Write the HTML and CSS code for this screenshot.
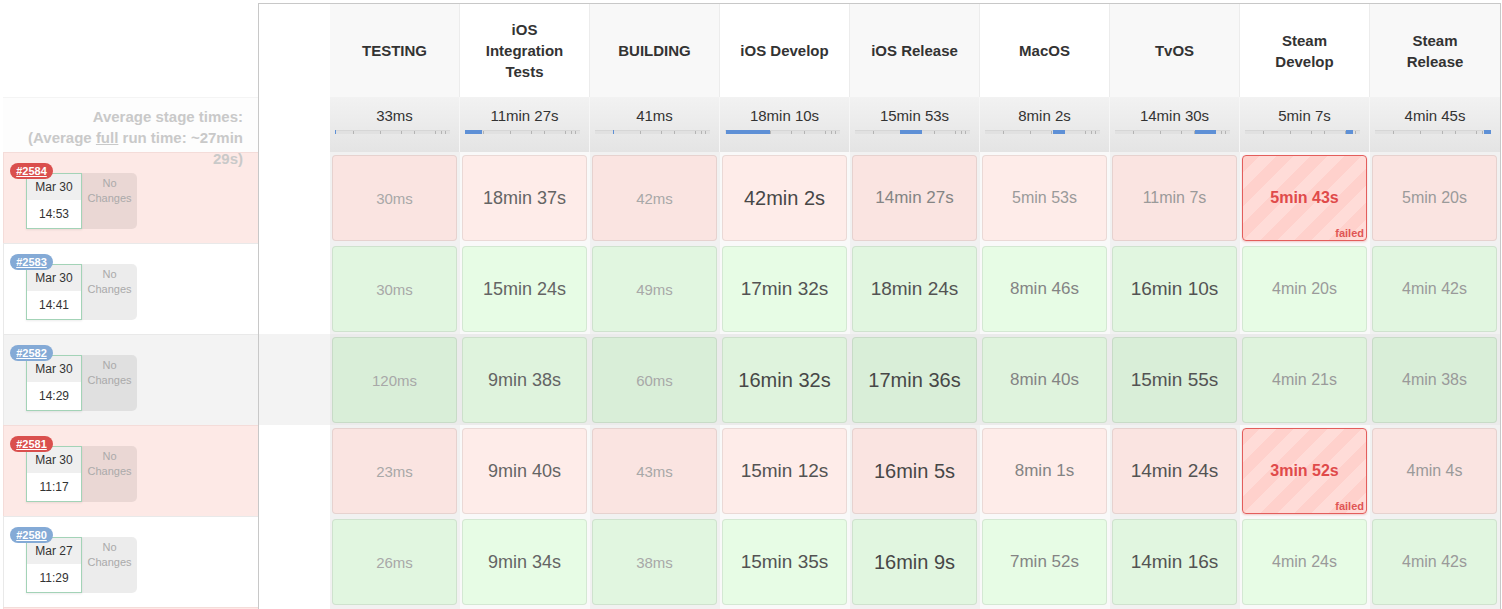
FILE: index.html
```html
<!DOCTYPE html>
<html>
<head>
  <meta charset="utf-8">
  <title>Stage View</title>
  <link rel="stylesheet" href="styles.css">
</head>
<body>
  <div class="stage-view">
    <!--builds-->
    <div class="jobs">
      <div class="jobs-head"></div>
      <div class="avg-label">Average stage times:<br>(Average <u>full</u> run time: ~27min 29s)</div>

      <div class="job failed">
        <div class="build">
          <a class="badge red" href="#">#2584</a>
          <div class="date"><div class="day">Mar 30</div><div class="time">14:53</div></div>
          <div class="changes">No<br>Changes</div>
        </div>
      </div>
      <div class="job">
        <div class="build">
          <a class="badge blue" href="#">#2583</a>
          <div class="date"><div class="day">Mar 30</div><div class="time">14:41</div></div>
          <div class="changes">No<br>Changes</div>
        </div>
      </div>
      <div class="job hover">
        <div class="build">
          <a class="badge blue" href="#">#2582</a>
          <div class="date"><div class="day">Mar 30</div><div class="time">14:29</div></div>
          <div class="changes">No<br>Changes</div>
        </div>
      </div>
      <div class="job failed">
        <div class="build">
          <a class="badge red" href="#">#2581</a>
          <div class="date"><div class="day">Mar 30</div><div class="time">11:17</div></div>
          <div class="changes">No<br>Changes</div>
        </div>
      </div>
      <div class="job">
        <div class="build">
          <a class="badge blue" href="#">#2580</a>
          <div class="date"><div class="day">Mar 27</div><div class="time">11:29</div></div>
          <div class="changes">No<br>Changes</div>
        </div>
      </div>
      <div class="job failed"></div>
    </div><!--jobs-->

    <!--stages-->
    <div class="stages">
      <div class="srow head">
        <div class="blank"></div>
        <div class="col">TESTING</div>
        <div class="col">iOS Integration Tests</div>
        <div class="col">BUILDING</div>
        <div class="col">iOS Develop</div>
        <div class="col">iOS Release</div>
        <div class="col">MacOS</div>
        <div class="col">TvOS</div>
        <div class="col">Steam Develop</div>
        <div class="col">Steam Release</div>
      </div>

      <div class="srow avg">
        <div class="blank"></div>
        <div class="col"><div class="avg-time">33ms</div><div class="bar"><div class="fill" style="margin-left:0%;width:1%"></div></div></div>
        <div class="col"><div class="avg-time">11min 27s</div><div class="bar"><div class="fill" style="margin-left:0%;width:14.8%"></div></div></div>
        <div class="col"><div class="avg-time">41ms</div><div class="bar"><div class="fill" style="margin-left:15.7%;width:1%"></div></div></div>
        <div class="col"><div class="avg-time">18min 10s</div><div class="bar"><div class="fill" style="margin-left:0.9%;width:38.3%"></div></div></div>
        <div class="col"><div class="avg-time">15min 53s</div><div class="bar"><div class="fill" style="margin-left:39.1%;width:19.1%"></div></div></div>
        <div class="col"><div class="avg-time">8min 2s</div><div class="bar"><div class="fill" style="margin-left:58.8%;width:10.8%"></div></div></div>
        <div class="col"><div class="avg-time">14min 30s</div><div class="bar"><div class="fill" style="margin-left:69.6%;width:18.3%"></div></div></div>
        <div class="col"><div class="avg-time">5min 7s</div><div class="bar"><div class="fill" style="margin-left:87.8%;width:6.1%"></div></div></div>
        <div class="col"><div class="avg-time">4min 45s</div><div class="bar"><div class="fill" style="margin-left:93.9%;width:6.1%"></div></div></div>
      </div>

      <div class="srow run failed">
        <div class="blank"></div>
        <div class="col"><div class="cell s0">30ms</div></div>
        <div class="col"><div class="cell s3">18min 37s</div></div>
        <div class="col"><div class="cell s0">42ms</div></div>
        <div class="col"><div class="cell s5">42min 2s</div></div>
        <div class="col"><div class="cell s2">14min 27s</div></div>
        <div class="col"><div class="cell s1">5min 53s</div></div>
        <div class="col"><div class="cell s1">11min 7s</div></div>
        <div class="col"><div class="cell fail">5min 43s<span class="fail-label">failed</span></div></div>
        <div class="col"><div class="cell s1">5min 20s</div></div>
      </div>

      <div class="srow run">
        <div class="blank"></div>
        <div class="col"><div class="cell s0">30ms</div></div>
        <div class="col"><div class="cell s3">15min 24s</div></div>
        <div class="col"><div class="cell s0">49ms</div></div>
        <div class="col"><div class="cell s4">17min 32s</div></div>
        <div class="col"><div class="cell s4">18min 24s</div></div>
        <div class="col"><div class="cell s2">8min 46s</div></div>
        <div class="col"><div class="cell s4">16min 10s</div></div>
        <div class="col"><div class="cell s1">4min 20s</div></div>
        <div class="col"><div class="cell s1">4min 42s</div></div>
      </div>

      <div class="srow run hover">
        <div class="blank"></div>
        <div class="col"><div class="cell s0">120ms</div></div>
        <div class="col"><div class="cell s3">9min 38s</div></div>
        <div class="col"><div class="cell s0">60ms</div></div>
        <div class="col"><div class="cell s5">16min 32s</div></div>
        <div class="col"><div class="cell s5">17min 36s</div></div>
        <div class="col"><div class="cell s2">8min 40s</div></div>
        <div class="col"><div class="cell s4">15min 55s</div></div>
        <div class="col"><div class="cell s1">4min 21s</div></div>
        <div class="col"><div class="cell s1">4min 38s</div></div>
      </div>

      <div class="srow run failed">
        <div class="blank"></div>
        <div class="col"><div class="cell s0">23ms</div></div>
        <div class="col"><div class="cell s3">9min 40s</div></div>
        <div class="col"><div class="cell s0">43ms</div></div>
        <div class="col"><div class="cell s4">15min 12s</div></div>
        <div class="col"><div class="cell s5">16min 5s</div></div>
        <div class="col"><div class="cell s2">8min 1s</div></div>
        <div class="col"><div class="cell s4">14min 24s</div></div>
        <div class="col"><div class="cell fail">3min 52s<span class="fail-label">failed</span></div></div>
        <div class="col"><div class="cell s1">4min 4s</div></div>
      </div>

      <div class="srow run">
        <div class="blank"></div>
        <div class="col"><div class="cell s0">26ms</div></div>
        <div class="col"><div class="cell s3">9min 34s</div></div>
        <div class="col"><div class="cell s0">38ms</div></div>
        <div class="col"><div class="cell s4">15min 35s</div></div>
        <div class="col"><div class="cell s5">16min 9s</div></div>
        <div class="col"><div class="cell s2">7min 52s</div></div>
        <div class="col"><div class="cell s4">14min 16s</div></div>
        <div class="col"><div class="cell s1">4min 24s</div></div>
        <div class="col"><div class="cell s1">4min 42s</div></div>
      </div>

      <div class="srow run failed">
        <div class="blank"></div>
        <div class="col"><div class="cell"></div></div>
        <div class="col"><div class="cell"></div></div>
        <div class="col"><div class="cell"></div></div>
        <div class="col"><div class="cell"></div></div>
        <div class="col"><div class="cell"></div></div>
        <div class="col"><div class="cell"></div></div>
        <div class="col"><div class="cell"></div></div>
        <div class="col"><div class="cell"></div></div>
        <div class="col"><div class="cell"></div></div>
      </div>
    </div><!--stages-->
  </div>
</body>
</html>
```

FILE: styles.css
```css
  html, body {
    height: 100%;
    margin: 0;
    padding: 0;
    overflow: hidden;
    background-color: #fff;
    font-family: "Liberation Sans", Arial, sans-serif;
    color: #333;
  }
  .stage-view {
    display: flex;
    align-items: flex-start;
  }

  /* builds column */
  .jobs {
    flex: none;
    width: 258px;
    padding-left: 3px;
    box-sizing: border-box;
  }
  .jobs-head {
    height: 97px;
  }
  .avg-label {
    height: 55px;
    box-sizing: border-box;
    padding: 8px 15px 0 0;
    border-top: 1px solid #f4f4f4;
    background-color: #fdfdfd;
    text-align: right;
    font-size: 15px;
    font-weight: bold;
    line-height: 21px;
    color: #c9c9c9;
  }
  .job {
    display: flex;
    height: 91px;
    box-sizing: border-box;
    padding: 20px 0 0 22px;
    border-top: 1px solid #e9e9e9;
    border-left: 1px solid #e9e9e9;
    background-color: #fff;
  }
  .job.failed {
    background-color: #fde9e6;
    border-color: #f4dcd9;
  }
  .job.hover {
    background-color: #f3f3f3;
  }
  .build {
    position: relative;
    display: flex;
  }
  .badge {
    position: absolute;
    left: -16px;
    top: -10px;
    z-index: 1;
    width: 43px;
    height: 16px;
    border-radius: 8px;
    text-align: center;
    font-size: 11px;
    font-weight: bold;
    line-height: 16px;
    color: #fff;
    text-decoration: underline;
  }
  .badge.red {
    background-color: #da4f4d;
  }
  .badge.blue {
    background-color: #84aad6;
  }
  .date {
    width: 56px;
    height: 56px;
    box-sizing: border-box;
    border: 1px solid #a3d3b7;
    background-color: #fff;
    box-shadow: 0 1px 2px rgba(0, 0, 0, 0.08);
    text-align: center;
    font-size: 12px;
    color: #333;
  }
  .day {
    height: 26px;
    line-height: 27px;
    background-color: #efefef;
  }
  .time {
    height: 28px;
    line-height: 28px;
  }
  .changes {
    width: 55px;
    height: 56px;
    box-sizing: border-box;
    padding-top: 3px;
    border-radius: 0 5px 5px 0;
    background-color: rgba(0, 0, 0, 0.075);
    text-align: center;
    font-size: 11px;
    line-height: 15px;
    color: #aaa;
  }

  /* stage table */
  .stages {
    flex: none;
    margin-top: 3px;
    border: 1px solid #c8c8c8;
    border-bottom: none;
  }
  .srow {
    display: grid;
    grid-template-columns: 71px repeat(9, 130px);
  }
  .srow.head {
    height: 93px;
  }
  .head .col {
    display: flex;
    align-items: center;
    justify-content: center;
    padding: 0 15px;
    box-sizing: border-box;
    border-right: 1px solid #ececec;
    text-align: center;
    font-size: 15px;
    font-weight: bold;
    line-height: 21px;
    color: #333;
  }
  .head .col:nth-child(even) {
    background-color: #f8f8f8;
  }
  .head .col:last-child {
    border-right: none;
  }
  .srow.avg {
    height: 55px;
    background: linear-gradient(#f2f2f2, #e4e4e4);
  }
  .avg .blank {
    background: #fff;
  }
  .avg .col {
    padding-top: 9px;
    box-sizing: border-box;
    border-right: 1px solid #f6f6f6;
    text-align: center;
  }
  .avg .col:last-child {
    border-right: none;
  }
  .avg-time {
    font-size: 15px;
    line-height: 20px;
    color: #333;
  }
  .bar {
    display: flex;
    height: 4px;
    margin: 4px 9px 0 5px;
    background-color: #e1e1e1;
    background-image: linear-gradient(#b4b4b4, #b4b4b4), linear-gradient(#b4b4b4, #b4b4b4),
      linear-gradient(#b4b4b4, #b4b4b4), linear-gradient(#b4b4b4, #b4b4b4),
      linear-gradient(#b4b4b4, #b4b4b4), linear-gradient(#b4b4b4, #b4b4b4),
      linear-gradient(#b4b4b4, #b4b4b4);
    background-size: 1px 100%;
    background-repeat: no-repeat;
    background-position: 15.7% 0, 39.1% 0, 58.3% 0, 69.6% 0, 87.8% 0, 93% 0, 96.5% 0;
    box-shadow: inset 0 1px 0 #d6d6d6;
  }
  .fill {
    height: 100%;
    min-width: 1px;
    background-color: #5e90d6;
  }

  /* run rows */
  .srow.run {
    height: 91px;
  }
  .run .col {
    padding: 3px 3px 2px 2px;
    box-sizing: border-box;
    background-color: #f9f9f9;
  }
  .run .col:nth-child(even) {
    background-color: #f1f1f1;
  }
  .cell {
    display: flex;
    align-items: center;
    justify-content: center;
    height: 100%;
    box-sizing: border-box;
    border: 1px solid rgba(0, 0, 0, 0.08);
    border-radius: 4px;
    background-color: #e7fce5;
  }
  .run .col:nth-child(even) .cell {
    background-color: #e1f6e0;
  }
  .run.failed .cell {
    background-color: #feece9;
  }
  .run.failed .col:nth-child(even) .cell {
    background-color: #fae4e1;
  }
  .run.hover .blank {
    background-color: #f3f3f3;
  }
  .run.hover .col {
    background-color: #ebebeb;
  }
  .run.hover .cell {
    background-color: #dff3dd;
  }
  .run.hover .col:nth-child(even) .cell {
    background-color: #d9eed8;
  }
  .run .cell.fail {
    position: relative;
    border-color: #e35e5c;
    background: repeating-linear-gradient(135deg, #ffd1cc 0 12px, #ffdcd8 12px 24px);
    box-shadow: 0 1px 2px rgba(220, 60, 60, 0.25);
    font-size: 16px;
    font-weight: bold;
    color: #e04a4a;
  }
  .fail-label {
    position: absolute;
    right: 2px;
    bottom: 1px;
    font-size: 11px;
    font-weight: bold;
    color: #e05656;
  }

  /* duration sizes */
  .s0 { font-size: 15px; color: #a8a8a8; }
  .s1 { font-size: 16px; color: #9a9a9a; }
  .s2 { font-size: 17px; color: #848484; }
  .s3 { font-size: 18px; color: #646464; }
  .s4 { font-size: 19px; color: #535353; }
  .s5 { font-size: 20px; color: #474747; }
```
